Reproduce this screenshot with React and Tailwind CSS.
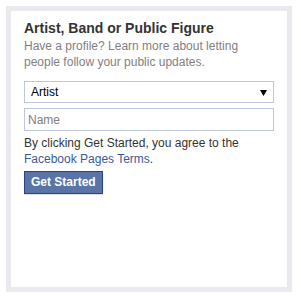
import React from "react";

export default function App() {
  return (
    <div
      className="w-[301px] h-[298px] bg-white pt-[6px] pl-[6px]"
      style={{ fontFamily: '"Liberation Sans", Arial, Helvetica, sans-serif' }}
    >
      <div className="w-[286px] h-[286px] bg-[#e9eaed] p-[5px]">
        <div className="w-full h-full bg-white px-[13px] pt-[8px]">
          <h2 className="text-[14px] font-bold leading-[18px] text-[#333333]">
            Artist, Band or Public Figure
          </h2>
          <p className="mt-[1px] text-[12px] leading-[16px] text-[#7f7f7f]">
            Have a profile? Learn more about letting people follow your public updates.
          </p>
          <div className="mt-[11px] h-[22px] w-full flex items-center border border-[#bdc7d8] bg-white">
            <select
              className="flex-1 h-full appearance-none bg-transparent pl-[6px] text-[12px] text-[#000000] outline-none"
              style={{ fontFamily: '"Liberation Sans", Arial, sans-serif' }}
              defaultValue="Artist"
            >
              <option>Artist</option>
              <option>Band</option>
              <option>Public Figure</option>
            </select>
            <svg width="7" height="6" viewBox="0 0 7 6" className="mr-[6px] mt-[1px]">
              <polygon points="0,0 7,0 3.5,6" fill="#000" />
            </svg>
          </div>
          <input
            type="text"
            placeholder="Name"
            className="mt-[5px] block h-[23px] w-full border border-[#bdc7d8] px-[3px] text-[12px] text-[#000] placeholder:text-[#808080] outline-none"
            style={{ fontFamily: '"Liberation Sans", Arial, sans-serif' }}
          />
          <p className="mt-[4px] text-[12px] leading-[16px] text-[#333333]">
            By clicking Get Started, you agree to the{" "}
            <a href="#" className="text-[#3b5998]">
              Facebook Pages Terms
            </a>
            .
          </p>
          <button
            className="mt-[4px] block border border-[#29447e] bg-[#5b74a8] px-[6px] pt-[2px] pb-[3px] text-[12px] font-bold leading-[16px] text-white shadow-[0_1px_1px_rgba(0,0,0,0.12)]"
            style={{ fontFamily: '"Liberation Sans", Arial, sans-serif' }}
          >
            Get Started
          </button>
        </div>
      </div>
    </div>
  );
}
